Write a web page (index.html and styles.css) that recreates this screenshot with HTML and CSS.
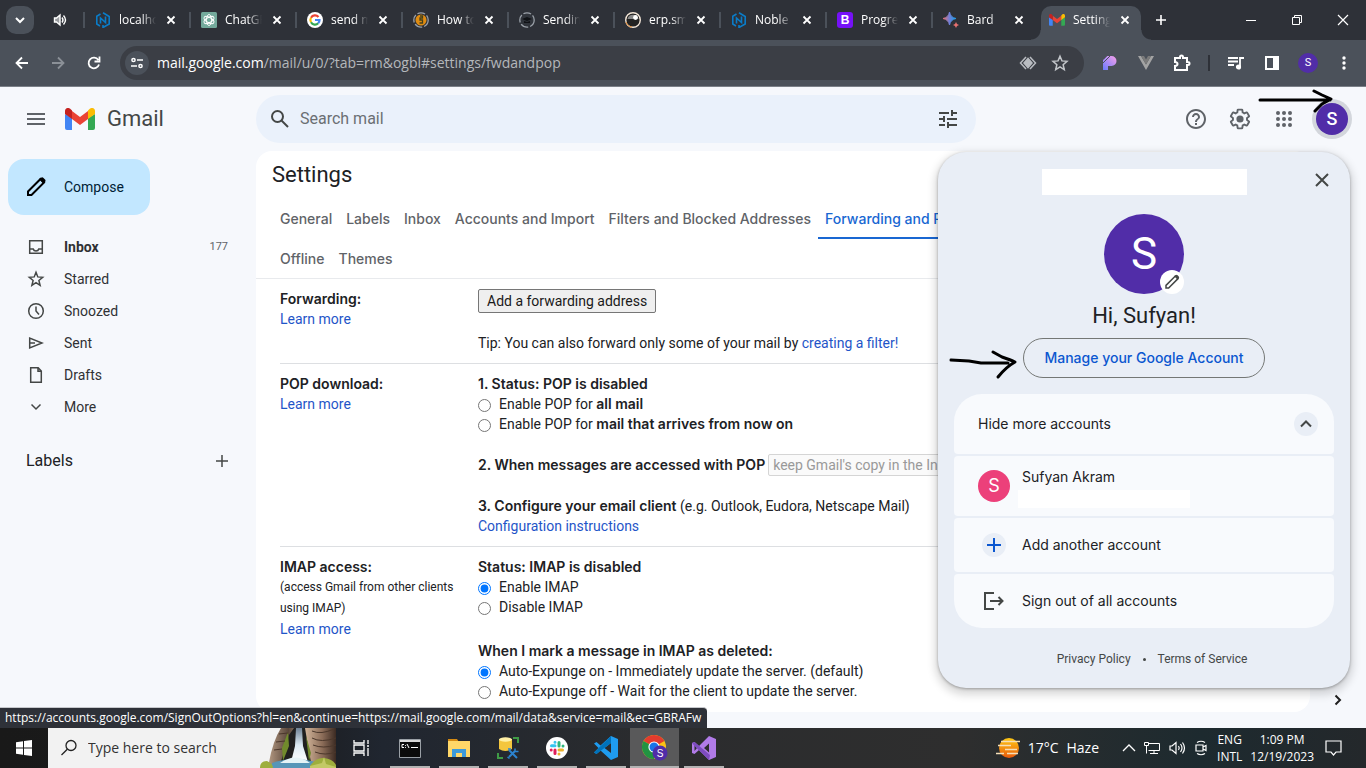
FILE: index.html
```html
<!DOCTYPE html>
<html lang="en">
<head>
<meta charset="utf-8">
<title>Settings - Gmail</title>
<link rel="stylesheet" href="styles.css">
</head>
<body>
<svg class="defs" aria-hidden="true">
  <defs>
    <symbol id="x" viewBox="0 0 14 14"><path d="M3.500 3.500l7 7M10.500 3.500l-7 7" stroke="currentColor" stroke-width="1.800" fill="none"/></symbol>
    <symbol id="gmail" viewBox="0 0 30 22">
      <path d="M0 6v14a2 2 0 0 0 2 2h5V10z" fill="#4285f4"/>
      <path d="M30 6v14a2 2 0 0 1-2 2h-5V10z" fill="#34a853"/>
      <path d="M7 3l8 6 8-6v8l-8 6-8-6z" fill="#ea4335"/>
      <path d="M0 6V3C0 .3 3-1 5.200.800L7 2.500V11L0 6z" fill="#c5221f"/>
      <path d="M30 6V3c0-2.700-3-4-5.200-2.200L23 2.500V11l7-5z" fill="#fbbc04"/>
    </symbol>
    <symbol id="nest" viewBox="0 0 16 16">
      <path d="M5 14L1.800 12V4.300L5.500 2M8 .8l6.200 3.700v7.500L8 15.500V13M5.500 11.500V6l5 4.500V4.500" fill="none" stroke="#0a7cc8" stroke-width="1.600"/>
    </symbol>
    <symbol id="pencil" viewBox="0 0 24 24"><path d="M4 16.500L16.500 4l3.500 3.500L7.500 20H4z" fill="none" stroke="currentColor" stroke-width="2"/><path d="M15 4l2.500-1.500q1-.5 2 .5l1.500 1.500q1 1 .3 2L19.500 9z" fill="currentColor"/></symbol>
  </defs>
</svg>

<header class="tabstrip">
  <button class="tabsearch" aria-label="Search tabs"><svg width="12" height="12" viewBox="0 0 12 12"><path d="M2 4l4 4 4-4" fill="none" stroke="#fff" stroke-width="2"/></svg></button>
  <div class="audiotab"><svg width="14" height="14" viewBox="0 0 14 14" fill="none" stroke="#fff" stroke-width="1.400"><path d="M1.500 5h2L7 2v10L3.500 9h-2z" fill="#9a9ca0"/><path d="M9 4.500q2 2.500 0 5M10.500 2.500q4 4.500 0 9"/></svg></div>
  <div class="tab"><svg width="16" height="16"><use href="#nest"/></svg><span class="tabname">localhost</span><button class="close" aria-label="Close tab"><svg width="14" height="14"><use href="#x"/></svg></button></div>
  <div class="tab"><svg width="16" height="16" viewBox="0 0 16 16"><rect width="16" height="16" rx="1.500" fill="#74aa9c"/><g fill="none" stroke="#fff" stroke-width=".9"><ellipse cx="8" cy="8" rx="2.600" ry="5.500"/><ellipse cx="8" cy="8" rx="2.600" ry="5.500" transform="rotate(60 8 8)"/><ellipse cx="8" cy="8" rx="2.600" ry="5.500" transform="rotate(120 8 8)"/></g></svg><span class="tabname">ChatGPT</span><button class="close" aria-label="Close tab"><svg width="14" height="14"><use href="#x"/></svg></button></div>
  <div class="tab"><svg width="16" height="16" viewBox="0 0 16 16"><circle cx="8" cy="8" r="8" fill="#fff"/><g fill="none" stroke-width="2.200"><path d="M11.500 5A4.600 4.600 0 0 0 4 5.700" stroke="#ea4335"/><path d="M4 5.700a4.600 4.600 0 0 0 0 4.600" stroke="#fbbc04"/><path d="M4 10.300a4.600 4.600 0 0 0 7.200 1" stroke="#34a853"/><path d="M11.200 11.300A4.500 4.500 0 0 0 12.500 8H8" stroke="#4285f4"/></g></svg><span class="tabname">send mail</span><button class="close" aria-label="Close tab"><svg width="14" height="14"><use href="#x"/></svg></button></div>
  <div class="tab"><svg width="16" height="16" viewBox="0 0 16 16"><circle cx="8" cy="8" r="7.200" fill="none" stroke="#9aa0a8" stroke-width="1.300" stroke-dasharray="8 2"/><circle cx="8" cy="8" r="5.500" fill="#e08c12"/><path d="M7 4h2.500v2H7v2h2.500v3H6.500" fill="none" stroke="#41401d" stroke-width="1.300"/></svg><span class="tabname">How to s</span><button class="close" aria-label="Close tab"><svg width="14" height="14"><use href="#x"/></svg></button></div>
  <div class="tab"><svg width="16" height="16" viewBox="0 0 16 16"><circle cx="8" cy="8" r="7.200" fill="#30343b" stroke="#9aa0a8" stroke-width="1.300" stroke-dasharray="8 2"/><path d="M3 7l5-2 5 2-5 2zM5 9v2h6V9l-3 1z" fill="#101216"/></svg><span class="tabname">Sending</span><button class="close" aria-label="Close tab"><svg width="14" height="14"><use href="#x"/></svg></button></div>
  <div class="tab"><svg width="16" height="16" viewBox="0 0 16 16"><circle cx="8" cy="8" r="7.300" fill="#222" stroke="#f3e6d8" stroke-width="1.400"/><path d="M2.500 7A5.700 5.700 0 0 1 13.500 7z" fill="#888"/><circle cx="10.500" cy="5.500" r="2.400" fill="#fff"/><path d="M1 10a7 7 0 0 0 6 5" fill="none" stroke="#e58a32" stroke-width="1"/></svg><span class="tabname">erp.sma</span><button class="close" aria-label="Close tab"><svg width="14" height="14"><use href="#x"/></svg></button></div>
  <div class="tab"><svg width="16" height="16"><use href="#nest"/></svg><span class="tabname">Noble</span><button class="close" aria-label="Close tab"><svg width="14" height="14"><use href="#x"/></svg></button></div>
  <div class="tab"><span class="bootstrap">B</span><span class="tabname">Progress</span><button class="close" aria-label="Close tab"><svg width="14" height="14"><use href="#x"/></svg></button></div>
  <div class="tab"><svg width="16" height="16" viewBox="0 0 16 16"><defs><linearGradient id="bard"><stop offset="0" stop-color="#e8706f"/><stop offset=".5" stop-color="#6f7fd8"/><stop offset="1" stop-color="#1aa0ea"/></linearGradient></defs><path d="M6.500 0Q7.500 5.500 13 6.500 7.500 7.500 6.500 13 5.500 7.500 0 6.500 5.500 5.500 6.500 0z" fill="url(#bard)" stroke="url(#bard)"/><path d="M13 10q.5 2.500 3 3-2.500.5-3 3-.5-2.500-3-3 2.500-.5 3-3z" fill="#e8706f"/></svg><span class="tabname">Bard</span><button class="close" aria-label="Close tab"><svg width="14" height="14"><use href="#x"/></svg></button></div>
  <div class="tab active"><svg width="16" height="12"><use href="#gmail"/></svg><span class="tabname">Settings</span><button class="close" aria-label="Close tab"><svg width="14" height="14"><use href="#x"/></svg></button></div>
  <button class="newtab" aria-label="New tab"><svg width="12" height="12" viewBox="0 0 12 12"><path d="M6 1v10M1 6h10" stroke="#fff" stroke-width="1.600"/></svg></button>
  <div class="wincontrols">
    <button aria-label="Minimize"><svg width="12" height="12"><path d="M1 6.500h10" stroke="#fff"/></svg></button>
    <button aria-label="Restore"><svg width="12" height="12" fill="none" stroke="#fff"><path d="M1.500 3.500h7v7h-7zM3.500 3.500v-2h7v7h-2"/></svg></button>
    <button aria-label="Close"><svg width="12" height="12"><path d="M1 1l10 10M11 1L1 11" stroke="#fff" stroke-width="1.200"/></svg></button>
  </div>
</header>

<div class="toolbar">
  <button aria-label="Back"><svg width="16" height="16" viewBox="0 0 16 16" fill="none" stroke="#fff" stroke-width="1.800"><path d="M14 8H3M8 2.500L2.500 8 8 13.500"/></svg></button>
  <button aria-label="Forward"><svg width="16" height="16" viewBox="0 0 16 16" fill="none" stroke="#8b9097" stroke-width="1.800"><path d="M2 8h11M8 2.500L13.500 8 8 13.500"/></svg></button>
  <button aria-label="Reload"><svg width="16" height="16" viewBox="0 0 16 16" fill="none" stroke="#fff" stroke-width="1.800"><path d="M13 9.500A5.300 5.300 0 1 1 12.300 5M13.500 1.500v5h-5"/></svg></button>
  <div class="omnibox">
    <button class="siteinfo" aria-label="Site information"><svg width="14" height="14" viewBox="0 0 14 14" fill="none" stroke="#fff" stroke-width="1.500"><circle cx="3.500" cy="4" r="1.600"/><path d="M7 4h6M1 10h6"/><circle cx="10.500" cy="10" r="1.600"/></svg></button>
    <span class="url"><b>mail.google.com</b>/mail/u/0/?tab=rm&amp;ogbl#settings/fwdandpop</span>
    <button class="boxbtn" aria-label="View page tools"><svg width="18" height="16" viewBox="0 0 18 16" fill="none" stroke="#b9bcc1" stroke-width="1.500"><path d="M9 3.500L5 8l4 4.500L13 8z" fill="#b9bcc1"/><path d="M7 2L1.500 8 7 14M11 2l5.500 6-5.500 6"/></svg></button>
    <button class="boxbtn" aria-label="Bookmark"><svg width="18" height="18" viewBox="0 0 24 24" fill="none" stroke="#c3c6ca" stroke-width="2"><path d="M12 3l2.600 6.200 6.700.6-5.100 4.400 1.500 6.600L12 17.300l-5.700 3.500 1.500-6.600-5.100-4.400 6.700-.6z"/></svg></button>
  </div>
  <div class="extensions">
    <button aria-label="Extension"><svg width="14" height="14" viewBox="0 0 14 14"><defs><linearGradient id="pp" x2="1" y1="1" y2="0"><stop stop-color="#6a7bff"/><stop offset="1" stop-color="#f9a0e8"/></linearGradient></defs><path d="M0 4L4 0h4.500a5 5 0 0 1 0 10H5v4H0z" fill="url(#pp)"/><path d="M0 3.500L3.500 0M0 7L7 0" stroke="#4b515a" stroke-width="1"/></svg></button>
    <button aria-label="Vue"><svg width="16" height="14" viewBox="0 0 16 14"><path d="M0 0h3l5 8.500L13 0h3L8 14z" fill="#a3a3a3"/><path d="M3 0h3l2 3.500L10 0h3L8 8.500z" fill="#7b7b7b"/></svg></button>
    <button aria-label="Extensions"><svg width="18" height="18" viewBox="0 0 18 18" fill="none" stroke="#fff" stroke-width="2"><path d="M2 4h5V3a1.500 1.500 0 0 1 3 0v1h4v4h1a1.500 1.500 0 0 1 0 3h-1v5H2v-4q2.500-.2 2.500-2T2 8z"/></svg></button>
    <span class="divider"></span>
    <button aria-label="Media"><svg width="16" height="14" viewBox="0 0 16 14" fill="none" stroke="#fff" stroke-width="1.800"><path d="M0 2h10M0 5.500h10M0 9h6M12 11V2h4"/><circle cx="10.500" cy="11" r="1.700" fill="#fff"/></svg></button>
    <button aria-label="Side panel"><svg width="16" height="16"><rect x="2" y="2" width="12" height="12" fill="none" stroke="#fff" stroke-width="2"/><path d="M9 2h5v12H9z" fill="#fff"/></svg></button>
    <button aria-label="Profile"><span class="avatar tiny">S</span></button>
    <button aria-label="Menu"><svg width="4" height="16" fill="#fff"><circle cx="2" cy="3" r="1.700"/><circle cx="2" cy="8" r="1.700"/><circle cx="2" cy="13" r="1.700"/></svg></button>
  </div>
</div>

<div class="gmail">
  <header class="masthead">
    <div class="brand">
      <button class="iconbtn" aria-label="Main menu"><svg width="18" height="12"><path d="M0 1h18M0 6h18M0 11h18" stroke="#5f6368" stroke-width="2"/></svg></button>
      <a class="logo" href="#"><svg width="30" height="22"><use href="#gmail"/></svg>Gmail</a>
    </div>
    <form class="search">
      <button type="button" aria-label="Search"><svg width="24" height="24" viewBox="0 0 24 24" fill="none" stroke="#444746" stroke-width="2"><circle cx="9.500" cy="9.500" r="5.500"/><path d="M13.500 13.500l6.500 6.500"/></svg></button>
      <input type="text" placeholder="Search mail" aria-label="Search mail">
      <button type="button" aria-label="Search options"><svg width="24" height="24" viewBox="0 0 24 24" fill="#444746"><path d="M3 17v2h6v-2H3zM3 5v2h10V5H3zm10 16v-2h8v-2h-8v-2h-2v6h2zM7 9v2H3v2h4v2h2V9H7zm14 4v-2H11v2h10zm-6-4h2V7h4V5h-4V3h-2v6z"/></svg></button>
    </form>
    <div class="account">
      <button class="iconbtn" aria-label="Support"><svg width="24" height="24" viewBox="0 0 24 24" fill="#5f6368"><path d="M11 18h2v-2h-2v2zm1-16C6.480 2 2 6.480 2 12s4.480 10 10 10 10-4.480 10-10S17.520 2 12 2zm0 18c-4.410 0-8-3.590-8-8s3.590-8 8-8 8 3.590 8 8-3.590 8-8 8zm0-14c-2.210 0-4 1.790-4 4h2c0-1.100.9-2 2-2s2 .9 2 2c0 2-3 1.750-3 5h2c0-2.250 3-2.500 3-5 0-2.210-1.790-4-4-4z"/></svg></button>
      <button class="iconbtn" aria-label="Settings"><svg width="24" height="24" viewBox="0 0 24 24"><g transform="translate(.7 .7) scale(.94)"><path d="M19.430 12.980c.04-.32.070-.64.070-.98 0-.34-.03-.66-.07-.98l2.110-1.650c.19-.15.240-.42.120-.64l-2-3.460c-.09-.16-.26-.25-.44-.25-.06 0-.12.010-.17.030l-2.490 1c-.52-.4-1.080-.73-1.690-.98l-.38-2.650C14.460 2.180 14.250 2 14 2h-4c-.25 0-.46.180-.49.420l-.38 2.650c-.61.250-1.170.590-1.690.980l-2.490-1c-.06-.02-.12-.03-.18-.03-.17 0-.34.090-.43.250l-2 3.460c-.13.220-.07.490.120.640l2.110 1.650c-.04.320-.07.650-.07.980 0 .330.030.660.070.980l-2.110 1.650c-.19.150-.24.420-.12.640l2 3.460c.09.160.260.250.440.250.06 0 .120-.01.170-.03l2.490-1c.52.400 1.080.730 1.690.980l.38 2.650c.03.240.240.420.490.420h4c.25 0 .460-.18.490-.42l.38-2.650c.61-.25 1.170-.59 1.690-.98l2.490 1c.06.020.120.030.180.030.17 0 .340-.09.430-.25l2-3.460c.12-.22.070-.49-.12-.64l-2.110-1.650z" fill="none" stroke="#5f6368" stroke-width="2"/></g><circle cx="12" cy="12" r="3.600" fill="#5f6368"/></svg></button>
      <button class="iconbtn" aria-label="Google apps"><svg width="16" height="16" fill="#5f6368"><g id="dots"><circle cx="2" cy="2" r="2"/><circle cx="8" cy="2" r="2"/><circle cx="14" cy="2" r="2"/></g><use href="#dots" y="6"/><use href="#dots" y="12"/></svg></button>
      <button class="ring" aria-label="Google Account"><span class="avatar small">S</span></button>
    </div>
  </header>

  <div class="columns">
    <aside class="sidebar">
      <button class="compose"><svg width="24" height="24" color="#000"><use href="#pencil"/></svg>Compose</button>
      <nav class="folders">
        <a href="#" class="current"><svg width="20" height="20" viewBox="0 0 20 20"><path d="M3.700 3.700h12.600v12.600H3.700zM3.700 12h3.500q.5 2 2.800 2t2.800-2h3.500"/></svg>Inbox<span class="count">177</span></a>
        <a href="#"><svg width="20" height="20" viewBox="0 0 20 20"><path d="M10 3.300l1.800 4.600 4.900.4-3.800 3.200 1.200 4.800L10 13.700l-4.100 2.600 1.200-4.800-3.800-3.200 4.900-.4z"/></svg>Starred</a>
        <a href="#"><svg width="20" height="20" viewBox="0 0 20 20"><circle cx="10" cy="10" r="7.300"/><path d="M10 5.500V10l3 3.500"/></svg>Snoozed</a>
        <a href="#"><svg width="20" height="20" viewBox="0 0 20 20"><path d="M3.700 5v10L16 10zM4 10h5"/></svg>Sent</a>
        <a href="#"><svg width="20" height="20" viewBox="0 0 20 20"><path d="M4.700 2.800h7.500l3.100 3.200v11.200H4.700zM12 3v3.300h3.300"/></svg>Drafts</a>
        <a href="#"><svg width="20" height="20" viewBox="0 0 20 20"><path d="M5.500 7.500L10 12l4.500-4.500"/></svg>More</a>
      </nav>
      <div class="labels"><h2>Labels</h2><button aria-label="Create new label"><svg width="12" height="12"><path d="M6 0v12M0 6h12" stroke="#444746" stroke-width="1.500"/></svg></button></div>
    </aside>

    <main class="card">
      <h1>Settings</h1>
      <nav class="settingstabs">
        <a href="#">General</a><a href="#">Labels</a><a href="#">Inbox</a><a href="#">Accounts and Import</a><a href="#">Filters and Blocked Addresses</a><a href="#" class="selected">Forwarding and POP/IMAP</a>
        <span class="break"></span>
        <a href="#">Offline</a><a href="#">Themes</a>
      </nav>
      <section class="setting">
        <div class="name"><h3>Forwarding:</h3><a href="#">Learn more</a></div>
        <div class="value">
          <button class="native">Add a forwarding address</button>
          <p class="spaced">Tip: You can also forward only some of your mail by <a href="#">creating a filter!</a></p>
        </div>
      </section>
      <section class="setting">
        <div class="name"><h3>POP download:</h3><a href="#">Learn more</a></div>
        <div class="value">
          <h3>1. Status: POP is disabled</h3>
          <label><input type="radio" name="pop"><span>Enable POP for <b>all mail</b></span></label>
          <label><input type="radio" name="pop"><span>Enable POP for <b>mail that arrives from now on</b></span></label>
          <div class="popaction spaced"><label for="copy"><b>2. When messages are accessed with POP</b></label><select id="copy" disabled><option>keep Gmail's copy in the Inbox</option></select></div>
          <p class="spaced"><b>3. Configure your email client</b> (e.g. Outlook, Eudora, Netscape Mail)</p>
          <a href="#">Configuration instructions</a>
        </div>
      </section>
      <section class="setting">
        <div class="name"><h3>IMAP access:</h3><p class="note">(access Gmail from other clients using IMAP)</p><a href="#">Learn more</a></div>
        <div class="value">
          <h3>Status: IMAP is disabled</h3>
          <label><input type="radio" name="imap" checked><span>Enable IMAP</span></label>
          <label><input type="radio" name="imap"><span>Disable IMAP</span></label>
          <h3 class="deleted">When I mark a message in IMAP as deleted:</h3>
          <label><input type="radio" name="expunge" checked><span>Auto-Expunge on - Immediately update the server. (default)</span></label>
          <label><input type="radio" name="expunge"><span>Auto-Expunge off - Wait for the client to update the server.</span></label>
        </div>
      </section>
    </main>
    <div class="rail"><button aria-label="Show side panel"><svg width="8" height="12"><path d="M1.500 1.500L6 6l-4.500 4.500" fill="none" stroke="#1f1f1f" stroke-width="2"/></svg></button></div>
  </div>

  <div class="popup" role="dialog" aria-label="Google Account">
    <div class="emailmask"></div>
    <button class="dismiss" aria-label="Close"><svg width="14" height="14"><path d="M1 1l12 12M13 1L1 13" stroke="#444746" stroke-width="2"/></svg></button>
    <div class="portrait"><span class="avatar large">S</span><button class="edit" aria-label="Change profile picture"><svg width="18" height="18" color="#444746"><use href="#pencil"/></svg></button></div>
    <p class="hello">Hi, Sufyan!</p>
    <a class="manage" href="#">Manage your Google Account</a>
    <div class="accounts">
      <button class="row tall">Hide more accounts<span class="round end"><svg width="12" height="8"><path d="M1 6.500l5-5 5 5" fill="none" stroke="#444746" stroke-width="2"/></svg></span></button>
      <button class="row tall person"><span class="avatar small pink">S</span><span class="who">Sufyan Akram<span class="addressmask"></span></span></button>
      <button class="row"><span class="lead"><span class="round"><svg width="14" height="14"><path d="M7 0v14M0 7h14" stroke="#0b57d0" stroke-width="2"/></svg></span></span>Add another account</button>
      <button class="row"><span class="lead"><svg width="20" height="18" fill="none" stroke="#444746" stroke-width="2"><path d="M10 1H1v16h9M6 9h12M14.500 5l4 4-4 4"/></svg></span>Sign out of all accounts</button>
    </div>
    <footer><a href="#">Privacy Policy</a><span class="dot"></span><a href="#">Terms of Service</a></footer>
  </div>

  <svg class="arrow first" width="76" height="26" fill="none" stroke="#000" stroke-width="3" stroke-linecap="round" stroke-linejoin="round"><path d="M2 12h70M56 3l8 4 9 4-9 5-7 7"/></svg>
  <svg class="arrow second" width="70" height="32" fill="none" stroke="#000" stroke-width="3" stroke-linecap="round" stroke-linejoin="round"><path d="M2 11l18 1 12 2h27M44 3l9 5q9 3 13 5-9 5-17 15"/></svg>
  <div class="statusbubble">https://accounts.google.com/SignOutOptions?hl=en&amp;continue=https://mail.google.com/mail/data&amp;service=mail&amp;ec=GBRAFw</div>
</div>

<footer class="taskbar">
  <button class="start" aria-label="Start"><svg width="16" height="16" fill="#fff"><path d="M0 2.300L7 1.200V7.500H0zM8 1.100L16 0v7.500H8zM0 8.500h7v6.300L0 13.800zM8 8.500h8V16l-8-1.100z"/></svg></button>
  <div class="tasksearch">
    <svg width="18" height="18" viewBox="0 0 18 18" fill="none" stroke="#222" stroke-width="1.300"><circle cx="11" cy="6.500" r="5"/><path d="M7.300 10.200L1.500 16"/></svg>
    <input type="text" placeholder="Type here to search" aria-label="Type here to search">
    <svg class="falls" width="76" height="40" viewBox="0 0 76 40">
      <defs><linearGradient id="rock"><stop offset="0" stop-color="#b59a83"/><stop offset=".3" stop-color="#5a473b"/><stop offset=".55" stop-color="#d1b499"/><stop offset=".8" stop-color="#8b6c58"/><stop offset="1" stop-color="#3b2a22"/></linearGradient><linearGradient id="fall" y2="1" x2="0"><stop stop-color="#6e8194"/><stop offset=".5" stop-color="#dceaf2"/><stop offset="1" stop-color="#fff"/></linearGradient></defs>
      <path d="M8 40Q12 14 21 0h55v40z" fill="url(#rock)"/><path d="M19 40L29 7l5-7h11l2 12 5 28z" fill="#20201f"/><path d="M22 20l6-16 1 14-6 15zM46 8l5 17-2 8z" fill="#718b2c"/><path d="M36 0h6l1 18 5 16H31l4-16z" fill="url(#fall)"/>
      <path d="M52 3q9 4 22-2M52 10q9 5 24 0M53 17q10 4 23 0M55 24q10 4 21 0M19 6l9-1M16 14l9-1M14 22l8-1" stroke="#4b372b" stroke-width="1" fill="none"/>
      <path d="M12 35q23-8 46 0v5H12z" fill="#5796b8"/><path d="M20 35q16-11 30 0z" fill="#e5f3f6"/><path d="M0 40q0-7 7-7 6 3 6 7zM50 38q6-9 14-8 9 1 12 7v3H50z" fill="#9eae3d"/><path d="M50 38l12-3 2-6 2 7 10 3v1H50z" fill="#c2c965"/>
    </svg>
  </div>
  <div class="apps">
    <button class="app plain" aria-label="Task view"><svg width="18" height="16" fill="none" stroke="#fff" stroke-width="1.300"><path d="M2 0v3h10V0M2 5h10v6H2zM2 16v-3h10v3M16 0v4M16 8v8M15 6h2"/></svg></button>
    <button class="app" aria-label="Command Prompt"><svg width="22" height="19"><path d="M.5.5h21v18H.5z" fill="#0b0b0b" stroke="#9aa0a6"/><path d="M1 2h20" stroke="#d9d9d9" stroke-width="2"/><path d="M5 5.500H3v3h2M6.500 6v.8M6.500 8v.8M8 5l2 4M12 8.500h7" stroke="#fff" fill="none"/></svg></button>
    <button class="app" aria-label="File Explorer"><svg width="22" height="19"><path d="M0 0h9l2 3H0z" fill="#d58a12"/><path d="M0 2h22v16H0z" fill="#ffd768"/><path d="M4 18v-8h14v8h-4v-4H8v4z" fill="#3d9ad9"/></svg></button>
    <button class="app" aria-label="SQL Server"><svg width="22" height="22"><path d="M2 2v10q6 4 13 0V2z" fill="#f4c63d"/><ellipse cx="8.500" cy="2.500" rx="6.500" ry="2.200" fill="#fff0a6"/><path d="M16 1h5v5M1 16v5h5" stroke="#3f9a46" stroke-width="2" fill="none"/><path d="M12 20l6-6M12 13l8 8" stroke="#2c83cf" stroke-width="2"/><path d="M11 12h3M18 11.500v3h3.500M10.500 20l2 1.500" stroke="#2c83cf" stroke-width="1.500" fill="none"/></svg></button>
    <button class="app" aria-label="Slack"><svg width="22" height="22"><circle cx="11" cy="11" r="11" fill="#fff"/><g stroke-width="3" stroke-linecap="round"><path d="M5.500 8.800h3.500M9 5.200v0" stroke="#36c5f0"/><path d="M13 5.500V9M17 9v0" stroke="#2eb67d"/><path d="M13 13h3.500M13 17v0" stroke="#ecb22e"/><path d="M9 13v3.500M5.200 13v0" stroke="#e01e5a"/></g></svg></button>
    <button class="app" aria-label="Visual Studio Code"><svg width="24" height="24"><path d="M17 0l7 3v18l-7 3L6.500 14.500 2.500 18 0 16.500 4.500 12 0 7.500 2.500 6l4 3.500zM17 7l-6.500 5 6.500 5z" fill="#1f9cf0"/><path d="M0 16.500L2.500 18 17 7V0z" fill="#0072ba"/></svg></button>
    <button class="app running" aria-label="Google Chrome"><svg width="26" height="26"><circle cx="12" cy="12" r="12" fill="#fbc116"/><path d="M12 12L1.600 6A12 12 0 0 1 22.400 6z" fill="#e33b2e"/><path d="M1.600 6A12 12 0 0 0 12 24l5-9-5-3z" fill="#229342"/><circle cx="12" cy="12" r="5.600" fill="#fff"/><circle cx="12" cy="12" r="4.500" fill="#1a73e8"/><circle cx="18" cy="18" r="7.500" fill="#512da8"/><text x="18" y="22" text-anchor="middle" class="badgetext">S</text></svg></button>
    <button class="app" aria-label="Visual Studio"><svg width="24" height="24"><path d="M17 0l7 3v18l-7 3L7 14l-4.500 4L0 17V7l2.500-1L7 10zM17 7.500L12 12l5 4.500zM2.500 9v6L5 12z" fill="#b17be8"/><path d="M0 7l2.500-1L18 19l-1 5L2.500 10z" fill="#7d4cc0"/></svg></button>
  </div>
  <div class="weather"><svg width="24" height="22"><defs><linearGradient id="sun" x2="0" y2="1"><stop stop-color="#ffc914"/><stop offset="1" stop-color="#e8590c"/></linearGradient></defs><circle cx="13" cy="11" r="10" fill="url(#sun)"/><path d="M5 4.500h19M2 8.500h13M9 12.500h12M0 16.500h8M11 16.500h11" stroke="#f5dfb8" stroke-width="1.700"/></svg><span>17°C</span><span>Haze</span></div>
  <div class="tray">
    <svg width="12" height="8" fill="none" stroke="#fff" stroke-width="1.300"><path d="M0 7l6-6 6 6"/></svg>
    <svg width="16" height="14" fill="none" stroke="#fff"><path d="M4.500 2.500h11v7h-11M.5 1.500h4v3h-4zM2.500 4.500v8M10 10v2.500M6 12.500h8"/></svg>
    <svg width="17" height="14" fill="none" stroke="#fff" stroke-width="1.200"><path d="M1 5h2l4-3.500v11L3 9H1zM9.500 5q1.500 2 0 4M11.500 3q3 4 0 8M13.500 1.500q4 5.500 0 11"/></svg>
    <svg width="12" height="16" fill="none" stroke="#fff" stroke-width="1.200"><path d="M2 2.500q4-2.500 8 0M2 13.500q4 2.500 8 0M1 5h7v6H1zM8 7l3-1.500v5L8 9"/></svg>
  </div>
  <div class="stack lang"><span>ENG</span><span>INTL</span></div>
  <div class="stack clock"><span>1:09 PM</span><span>12/19/2023</span></div>
  <button class="notify" aria-label="Notifications"><svg width="17" height="16" fill="none" stroke="#fff" stroke-width="1.200"><path d="M1 1h15v11h-5l-2.500 3L6 12H1z"/></svg></button>
</footer>
</body>
</html>
```
FILE: styles.css
```css
* { box-sizing: border-box; }
body {
  margin: 0;
  min-height: 100vh;
  display: flex;
  flex-direction: column;
  font: 14px/20px Roboto, "Liberation Sans", sans-serif;
  color: #202124;
  background: #f6f8fc;
}
button {
  border: 0;
  padding: 0;
  background: none;
  font: inherit;
  color: inherit;
  display: flex;
  align-items: center;
  justify-content: center;
}
a { color: #1f55c8; text-decoration: none; }
h1, h2, h3, p { margin: 0; }
h3, .value b { font-family: Inter, Roboto, sans-serif; font-size: 14px; font-weight: 600; line-height: 20px; }
svg { flex: none; display: block; overflow: visible; }
.defs { position: absolute; width: 0; height: 0; }

/* Avatars */
.avatar {
  display: flex;
  align-items: center;
  justify-content: center;
  border-radius: 50%;
  background: #512da8;
  color: #fff;
}
.tiny { width: 20px; height: 20px; font-size: 11px; }
.small { width: 32px; height: 32px; font-size: 18px; font-weight: 500; }
.large { width: 80px; height: 80px; font-size: 44px; }
.pink { background: #ec407a; font-weight: 400; }

/* Browser tabs */
.tabstrip {
  display: flex;
  align-items: center;
  height: 40px;
  padding-left: 6px;
  background: #2e3138;
  color: #fff;
  font: 12px/16px "Open Sans", "Noto Sans", sans-serif;
}
.tabsearch { width: 28px; height: 28px; border-radius: 10px; background: #4b515a; }
.audiotab { width: 49px; padding-left: 19px; }
.tab { display: flex; align-items: center; gap: 8px; width: 106px; padding-left: 10px; }
.tab::before {
  content: "";
  width: 2px;
  height: 16px;
  margin: 0 2px 0 -10px;
  background: #4b515a;
}
.tabname {
  width: 37px;
  overflow: hidden;
  white-space: nowrap;
  -webkit-mask-image: linear-gradient(90deg, #000 60%, transparent);
  mask-image: linear-gradient(90deg, #000 60%, transparent);
}
.bootstrap {
  width: 16px;
  border-radius: 3px;
  background: #7611f7;
  text-align: center;
  font: 700 12px/16px "Liberation Sans", sans-serif;
}
.active {
  position: relative;
  align-self: flex-end;
  height: 34px;
  width: 100px;
  margin-left: 4px;
  padding: 0 0 6px 8px;
  border-radius: 10px 10px 0 0;
  background: #4b515a;
}
.active::before, .active::after {
  content: "";
  position: absolute;
  bottom: 0;
  left: -10px;
  width: 10px;
  height: 10px;
  margin: 0;
  background: radial-gradient(circle at 0 0, transparent 9px, #4b515a 10px);
}
.active::after { left: 100%; background: radial-gradient(circle at 100% 0, transparent 9px, #4b515a 10px); }
.newtab { width: 28px; height: 28px; margin-left: 6px; }
.wincontrols { display: flex; margin-left: auto; }
.wincontrols button { width: 46px; height: 40px; }

/* Browser toolbar */
.toolbar {
  display: flex;
  align-items: center;
  height: 47px;
  padding: 0 4px;
  border-bottom: 1px solid #7b8088;
  background: #4b515a;
}
.toolbar button { width: 36px; height: 36px; }
.omnibox {
  flex: 1;
  display: flex;
  align-items: center;
  height: 34px;
  margin: 0 8px;
  padding: 0 8px 0 5px;
  border-radius: 17px;
  background: #3b3e45;
  color: #b4b7bb;
  font: 14px/20px "Open Sans", "Noto Sans", sans-serif;
}
.omnibox .siteinfo { width: 24px; height: 24px; border-radius: 50%; background: #4b515a; }
.omnibox .boxbtn { width: 32px; }
.url { flex: 1; margin-left: 8px; }
.url b { font-weight: 400; color: #fff; }
.extensions { display: flex; align-items: center; }
.divider { width: 2px; height: 16px; margin: 0 8px; background: #2e3138; }

/* Gmail */
.gmail { position: relative; flex: 1; display: flex; flex-direction: column; }
.masthead { display: flex; align-items: center; height: 64px; padding-right: 14px; }
.brand { display: flex; align-items: center; width: 256px; padding-left: 14px; }
.iconbtn { width: 44px; height: 44px; }
.logo { display: flex; align-items: center; gap: 12px; margin-left: 7px; font-size: 22px; line-height: 24px; color: #444746; }
.search {
  flex: 1;
  display: flex;
  align-items: center;
  max-width: 720px;
  height: 48px;
  padding: 0 16px 0 12px;
  border-radius: 24px;
  background: #eaf1fb;
}
.search input {
  flex: 1;
  min-width: 0;
  margin-left: 8px;
  padding: 0;
  border: 0;
  background: none;
  font: 16px/24px Roboto, sans-serif;
}
.search input::placeholder { color: #6b6f73; opacity: 1; }
.account { display: flex; align-items: center; margin-left: auto; }
.ring {
  width: 40px;
  height: 40px;
  margin-left: 6px;
  border-radius: 50%;
  background: #d3d6dc;
}
.columns { flex: 1; display: flex; padding-bottom: 16px; }
.sidebar { width: 256px; padding-top: 8px; color: #202124; }
.compose {
  justify-content: flex-start;
  width: 142px;
  height: 56px;
  margin-left: 8px;
  padding-left: 16px;
  gap: 16px;
  border-radius: 16px;
  background: #c2e7ff;
  color: #001d35;
}
.folders { padding-top: 16px; }
.folders a { display: flex; align-items: center; height: 32px; padding: 0 28px 0 26px; color: #303134; }
.folders svg { margin-right: 18px; fill: none; stroke: #444746; stroke-width: 1.500; }
.folders .current { font-weight: 700; }
.count { margin-left: auto; font-size: 11px; font-weight: 400; color: #5f6368; }
.labels { display: flex; justify-content: space-between; align-items: center; height: 40px; margin-top: 18px; padding: 0 28px 0 26px; }
.labels h2 { font-size: 16px; font-weight: 400; }

/* Settings card */
.card { flex: 1; min-width: 0; border-radius: 16px; background: #fff; }
h1 { padding-left: 16px; font-size: 22px; font-weight: 400; line-height: 48px; }
.settingstabs {
  display: flex;
  flex-wrap: wrap;
  height: 80px;
  padding-left: 17px;
  border-bottom: 1px solid #e8eaed;
  font: 500 14px/40px Inter, Roboto, sans-serif;
}
.settingstabs a { padding: 0 7px; height: 40px; color: #5f6368; }
.settingstabs .selected { color: #1967d2; border-bottom: 2px solid #1967d2; }
.break { width: 100%; }
.setting {
  display: grid;
  grid-template-columns: 182px 1fr;
  column-gap: 16px;
  margin-left: 24px;
  padding: 10px 0;
}
.setting + .setting { border-top: 1px solid #dddfe2; }
.note { font-size: 12px; line-height: 21px; }
.spaced { margin-top: 20px; }
.deleted { margin-top: 24px; }
.value label { display: flex; align-items: center; height: 20px; }
.value input { width: 13px; height: 13px; margin: 2px 8px 0 0; }
.native {
  height: 24px;
  padding: 0 8px;
  border: 1px solid #767676;
  border-radius: 2px;
  background: #efefef;
  color: #1a1a1a;
}
.popaction { display: flex; align-items: center; gap: 3px; }
.popaction select {
  height: 22px;
  border: 1px solid #d5d5d5;
  border-radius: 2px;
  background: #fafafa;
  color: #999;
  opacity: 1;
  font: inherit;
}
.rail { display: flex; align-items: flex-end; justify-content: center; width: 56px; padding-bottom: 6px; }

/* Account popup */
.popup {
  position: absolute;
  top: 65px;
  right: 16px;
  width: 412px;
  display: flex;
  flex-direction: column;
  align-items: center;
  padding: 17px 16px 19px;
  border-radius: 28px;
  background: #e9eef6;
  box-shadow: 0 4px 8px 3px rgba(0, 0, 0, .15), 0 1px 3px rgba(0, 0, 0, .3);
}
.emailmask { width: 205px; height: 26px; background: #fff; }
.dismiss { position: absolute; top: 16px; right: 16px; width: 24px; height: 24px; }
.portrait { position: relative; margin-top: 19px; }
.edit {
  position: absolute;
  right: 0;
  bottom: 0;
  width: 24px;
  height: 24px;
  border-radius: 50%;
  background: #fff;
}
.hello { margin-top: 8px; font-size: 22px; line-height: 28px; }
.manage {
  margin-top: 8px;
  padding: 0 20px;
  border: 1px solid #747775;
  border-radius: 20px;
  font: 500 14px/38px Inter, Roboto, sans-serif;
  color: #0b57d0;
}
.accounts { align-self: stretch; display: grid; gap: 2px; margin-top: 16px; border-radius: 28px; overflow: hidden; }
.row { justify-content: flex-start; height: 54px; padding: 0 16px 0 24px; border-radius: 4px; background: #f8fafd; font-family: Inter, Roboto, sans-serif; }
.tall { height: 60px; }
.lead { display: flex; justify-content: center; width: 32px; margin-right: 12px; }
.round { display: flex; align-items: center; justify-content: center; width: 24px; height: 24px; border-radius: 50%; background: #e9eef6; }
.end { margin-left: auto; }
.person .who { display: grid; gap: 3px; margin-left: 12px; padding-top: 3px; text-align: left; }
.addressmask { width: 172px; height: 18px; margin-left: -4px; background: #fff; }
.popup footer { display: flex; align-items: center; gap: 12px; margin: 21px 0 0 16px; font-size: 12px; }
.popup footer a { color: #444746; }
.dot { width: 3px; height: 3px; border-radius: 50%; background: #444746; }
.arrow { position: absolute; }
.first { top: 1px; right: 32px; }
.second { top: 262px; right: 347px; }
.statusbubble {
  position: absolute;
  left: 0;
  bottom: 0;
  padding: 0 6px 0 5px;
  border-top: 1px solid #c6c8cc;
  border-radius: 0 4px 0 0;
  background: #2e3138;
  color: #fff;
  font: 12px/20px "Open Sans", "Noto Sans", sans-serif;
}

/* Taskbar */
.taskbar {
  display: flex;
  align-items: center;
  height: 40px;
  background: linear-gradient(90deg, #191919 0, #1b1b1c 20%, #202630 28%, #2b2c2e 48%, #2e2e2e 70%, #1d2a2f 88%, #24282b);
  color: #fff;
  font: 14px/20px "Open Sans", "Noto Sans", sans-serif;
}
.start { width: 48px; height: 40px; }
.tasksearch { display: flex; align-items: center; width: 288px; height: 40px; padding-left: 12px; background: #f2f2f2; }
.tasksearch input {
  flex: 1;
  min-width: 0;
  margin-left: 10px;
  padding: 0;
  border: 0;
  background: none;
  font: inherit;
}
.tasksearch input::placeholder { color: #333; opacity: 1; }
.apps { display: flex; }
.app { width: 49px; height: 40px; background: linear-gradient(#b3b3b3, #b3b3b3) center bottom / 40px 2px no-repeat; }
.plain { background: none; }
.running { background: linear-gradient(#b3b3b3, #b3b3b3) center bottom / 49px 2px no-repeat, #59595a; }
.badgetext { font: 10px "Liberation Sans", sans-serif; fill: #fff; }
.weather { display: flex; align-items: center; gap: 8px; margin-left: auto; }
.tray { display: flex; align-items: center; gap: 9px; margin-left: 24px; }
.stack { display: flex; flex-direction: column; align-items: center; font-size: 12px; line-height: 17px; }
.lang { margin-left: 10px; }
.clock { margin-left: 8px; }
.notify { width: 38px; height: 40px; margin-right: 14px; }
```
